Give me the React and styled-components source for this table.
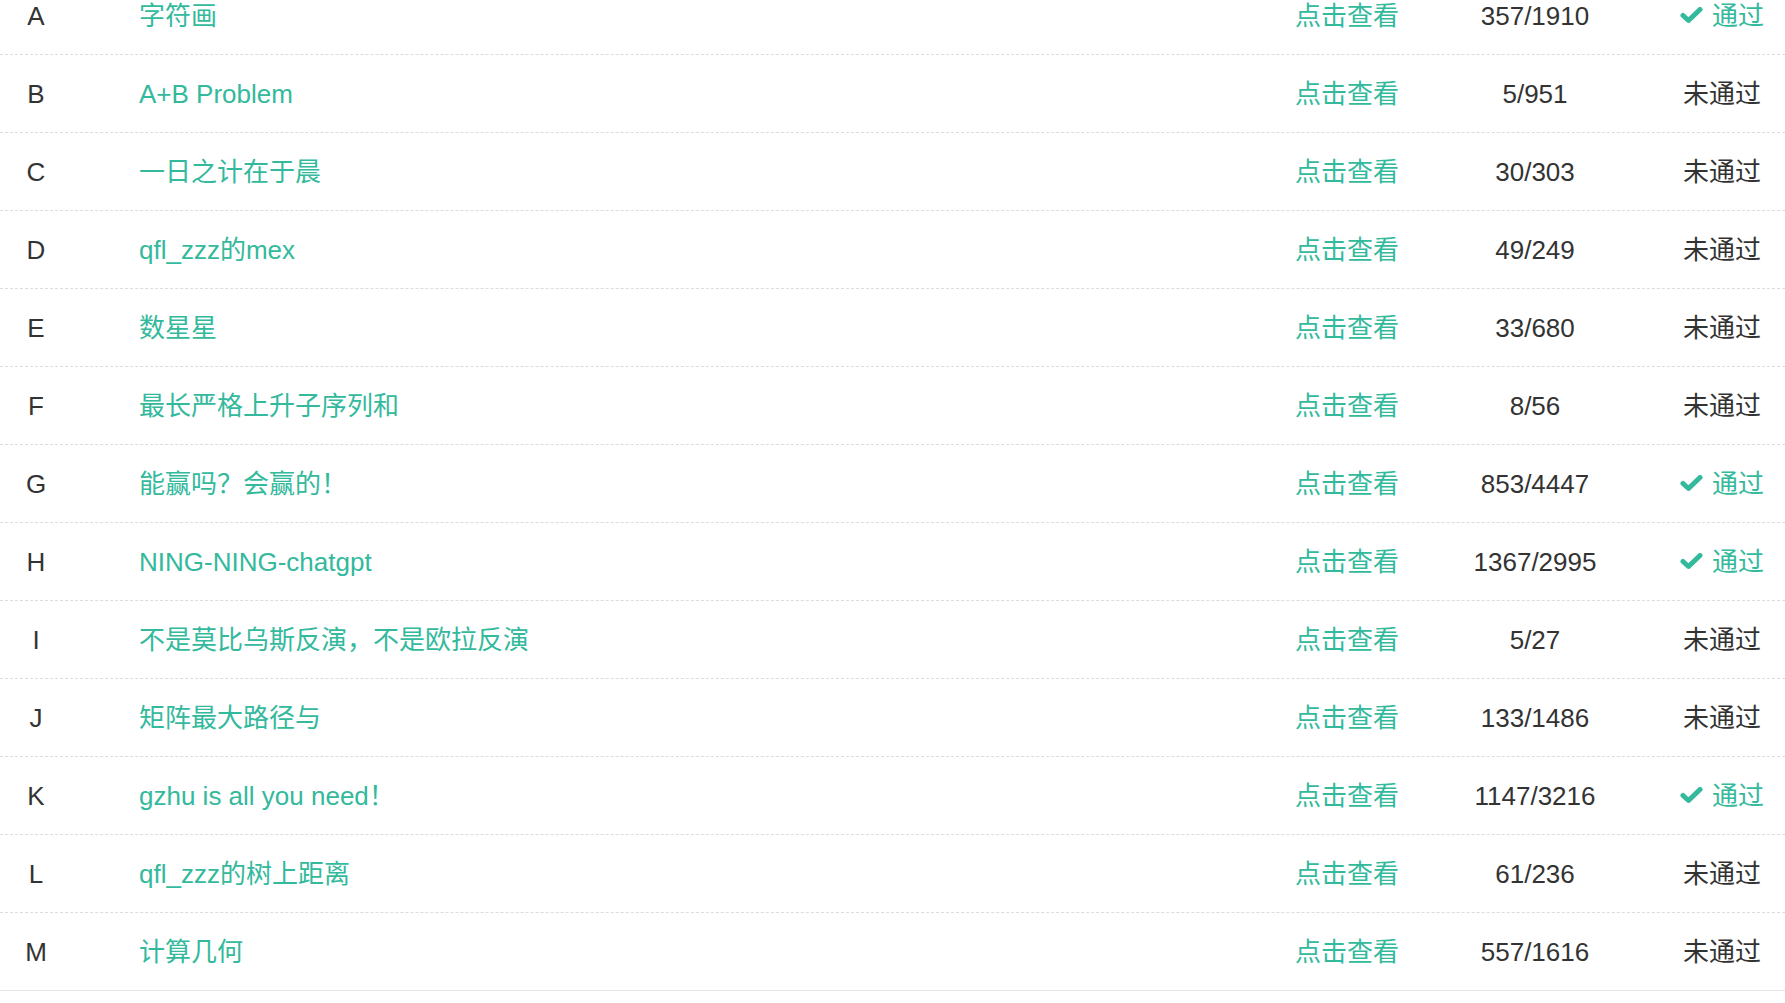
import React from 'react';
import styled, { createGlobalStyle } from 'styled-components';

const GlobalStyle = createGlobalStyle`
  html, body {
    margin: 0;
    padding: 0;
    background: #fff;
    overflow: hidden;
  }
  body {
    font-family: "Liberation Sans", Arial, "Noto Sans CJK SC", sans-serif;
    color: #333;
  }
`;

const Table = styled.div`
  margin-top: -23px;
  width: 100%;
  border-bottom: 1px solid #e6e6e6;
`;

const Row = styled.div`
  display: grid;
  grid-template-columns: 72px 1fr 128px 248px 126px;
  align-items: center;
  height: 77px;
  font-size: 26px;
  line-height: 30px;
  border-bottom: ${p => (p.last ? 'none' : '1px dashed #dcdcdc')};
`;

const Index = styled.div`
  text-align: center;
  color: #333;
`;

const Title = styled.a`
  padding-left: 67px;
  color: #33b99c;
  text-decoration: none;
  white-space: nowrap;
`;

const Link = styled.a`
  text-align: center;
  color: #33b99c;
  text-decoration: none;
  white-space: nowrap;
`;

const Count = styled.div`
  text-align: center;
  color: #333;
`;

const Status = styled.div`
  display: flex;
  align-items: center;
  justify-content: center;
  white-space: nowrap;
  color: ${p => (p.pass ? '#33b99c' : '#333')};
  svg {
    width: 23px;
    height: 17px;
    margin-right: 9px;
  }
`;

const Check = () => (
  <svg viewBox="0 0 23 17">
    <polyline
      points="3,8.5 8.5,13.5 20,2.5"
      fill="none"
      stroke="currentColor"
      strokeWidth="5"
      strokeLinejoin="round"
      strokeLinecap="round"
    />
  </svg>
);

const problems = [
  ['A', '字符画', '357/1910', true],
  ['B', 'A+B Problem', '5/951', false],
  ['C', '一日之计在于晨', '30/303', false],
  ['D', 'qfl_zzz的mex', '49/249', false],
  ['E', '数星星', '33/680', false],
  ['F', '最长严格上升子序列和', '8/56', false],
  ['G', '能赢吗？会赢的！', '853/4447', true],
  ['H', 'NING-NING-chatgpt', '1367/2995', true],
  ['I', '不是莫比乌斯反演，不是欧拉反演', '5/27', false],
  ['J', '矩阵最大路径与', '133/1486', false],
  ['K', 'gzhu is all you need！', '1147/3216', true],
  ['L', 'qfl_zzz的树上距离', '61/236', false],
  ['M', '计算几何', '557/1616', false],
];

const App = () => {
  return (
    <>
      <GlobalStyle />
      <Table>
        {problems.map(([id, title, count, pass], i) => (
          <Row key={id} last={i === problems.length - 1}>
            <Index>{id}</Index>
            <Title>{title}</Title>
            <Link>点击查看</Link>
            <Count>{count}</Count>
            <Status pass={pass}>
              {pass ? (
                <>
                  <Check />
                  通过
                </>
              ) : (
                '未通过'
              )}
            </Status>
          </Row>
        ))}
      </Table>
    </>
  );
};

export default App;
